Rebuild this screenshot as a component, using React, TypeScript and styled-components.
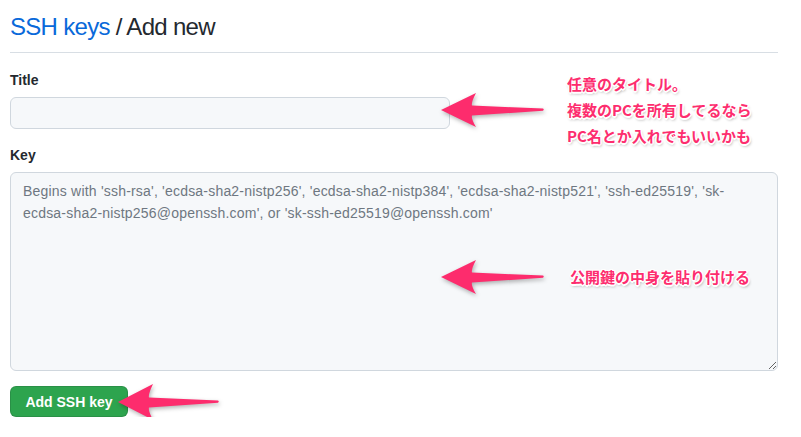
import styled, { createGlobalStyle } from 'styled-components';

const GlobalStyle = createGlobalStyle`
  * { box-sizing: border-box; }
  body {
    margin: 0;
    background: #ffffff;
    font-family: "Liberation Sans", Arial, "Noto Sans CJK JP", sans-serif;
    color: #24292f;
  }
`;

const Page = styled.div`
  position: relative;
  width: 788px;
  padding: 0 10px;
`;

const Header = styled.div`
  padding: 9px 0 7px;
  border-bottom: 1px solid #d8dee4;
  font-size: 24px;
  line-height: 36px;
  font-weight: 400;
  letter-spacing: -0.7px;
`;

const Crumb = styled.a`
  color: #0969da;
  text-decoration: none;
`;

const Form = styled.form`
  display: flex;
  flex-direction: column;
  padding-top: 17px;
`;

const Label = styled.label<{ $top?: number }>`
  display: block;
  margin-top: ${(p) => p.$top ?? 0}px;
  margin-bottom: 6px;
  font-size: 14px;
  line-height: 21px;
  font-weight: 700;
`;

const Input = styled.input`
  width: 440px;
  height: 32px;
  padding: 5px 12px;
  border: 1px solid #d0d7de;
  border-radius: 6px;
  background: #f6f8fa;
  font: inherit;
  font-size: 14px;
  outline: none;
`;

const TextArea = styled.textarea`
  width: 768px;
  height: 199px;
  padding: 7px 12px;
  border: 1px solid #d0d7de;
  border-radius: 6px;
  background: #f6f8fa;
  font-family: inherit;
  font-size: 14px;
  line-height: 22px;
  letter-spacing: 0.2px;
  color: #24292f;
  outline: none;

  &::placeholder {
    color: #6e7781;
  }
`;

const SubmitButton = styled.button`
  align-self: flex-start;
  margin-top: 15px;
  width: 118px;
  height: 31px;
  border: 1px solid rgba(27, 31, 36, 0.15);
  border-radius: 6px;
  background: #2da44e;
  color: #ffffff;
  font-family: inherit;
  font-size: 14px;
  font-weight: 700;
  cursor: pointer;
`;

// annotation drawn over the screenshot: an arrow and its note
const Callout = styled.div<{ $x: number; $y: number; $gap?: number }>`
  position: absolute;
  left: ${(p) => p.$x}px;
  top: ${(p) => p.$y}px;
  transform: translateY(-50%);
  display: flex;
  align-items: center;
  gap: ${(p) => p.$gap ?? 24}px;
`;

const Note = styled.div`
  font-family: "Noto Sans CJK JP", sans-serif;
  font-size: 15px;
  font-weight: 700;
  line-height: 26px;
  color: #fd2d6e;
  white-space: nowrap;
  text-shadow:
    1px 1px 0 #fff,
    -1px -1px 0 #fff,
    1px -1px 0 #fff,
    -1px 1px 0 #fff,
    0 1.5px 0 #fff,
    1.5px 0 0 #fff,
    0 -1.5px 0 #fff,
    -1.5px 0 0 #fff,
    1px 2px 3px rgba(0, 0, 0, 0.4);
`;

const ArrowSvg = styled.svg`
  display: block;
  flex: none;
  overflow: visible;
  filter: drop-shadow(1px 2px 2px rgba(0, 0, 0, 0.3));
`;

// tip at the left edge, vertical centre; points left
const Arrow = ({ len = 102, head = 34, half = 17 }: { len?: number; head?: number; half?: number }) => (
  <ArrowSvg width={len + 2} height={40} viewBox={`0 0 ${len + 2} 40`}>
    <path
      d={`M0 20 L${head + 1} ${20 - half} Q${head - 4} 12.5 ${head - 3} 15.5 L${len} 18.6 Q${len + 1.5} 19.5 ${len} 20.8 L${head - 3} 25.5 Q${head - 4} 28.5 ${head + 1} ${20 + half} Z`}
      fill="#fd2c6d"
    />
  </ArrowSvg>
);

const App = () => (
  <>
    <GlobalStyle />
    <Page>
      <Header>
        <Crumb href="#">SSH keys</Crumb> / Add new
      </Header>
      <Form onSubmit={(e) => e.preventDefault()}>
        <Label htmlFor="key-title">Title</Label>
        <Input id="key-title" type="text" />
        <Label htmlFor="key-body" $top={16}>
          Key
        </Label>
        <TextArea
          id="key-body"
          placeholder="Begins with 'ssh-rsa', 'ecdsa-sha2-nistp256', 'ecdsa-sha2-nistp384', 'ecdsa-sha2-nistp521', 'ssh-ed25519', 'sk-ecdsa-sha2-nistp256@openssh.com', or 'sk-ssh-ed25519@openssh.com'"
        />
        <SubmitButton type="submit">Add SSH key</SubmitButton>
      </Form>

      <Callout $x={441} $y={110} $gap={22}>
        <Arrow />
        <Note>
          任意のタイトル。
          <br />
          複数のPCを所有してるなら
          <br />
          PC名とか入れでもいいかも
        </Note>
      </Callout>
      <Callout $x={441} $y={277} $gap={25}>
        <Arrow />
        <Note>公開鍵の中身を貼り付ける</Note>
      </Callout>
      <Callout $x={118} $y={402}>
        <Arrow len={100} half={18} />
      </Callout>
    </Page>
  </>
);

export default App;
